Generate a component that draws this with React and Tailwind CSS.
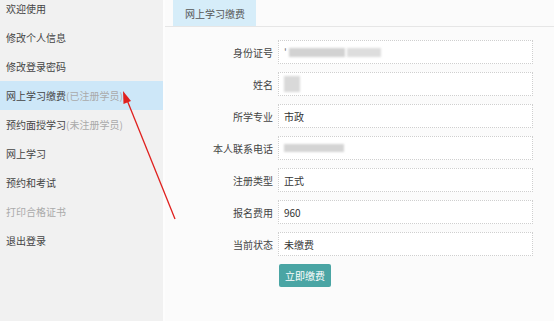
const menu = [
  { label: "欢迎使用" },
  { label: "修改个人信息" },
  { label: "修改登录密码" },
  { label: "网上学习缴费", note: "(已注册学员)", active: true },
  { label: "预约面授学习", note: "(未注册学员)" },
  { label: "网上学习" },
  { label: "预约和考试" },
  { label: "打印合格证书", disabled: true },
  { label: "退出登录" },
];

const fields = [
  { label: "身份证号", blur: "id" },
  { label: "姓名", blur: "name" },
  { label: "所学专业", value: "市政" },
  { label: "本人联系电话", blur: "phone" },
  { label: "注册类型", value: "正式" },
  { label: "报名费用", value: "960" },
  { label: "当前状态", value: "未缴费" },
];

const Blur = ({ kind }) => {
  if (kind === "id") {
    return (
      <div className="flex items-center gap-[2px]">
        <span className="text-[10px] leading-none text-[#777]">'</span>
        <div className="h-[9px] w-[56px] bg-[#d2d2d2] blur-[1px]" />
        <div className="h-[9px] w-[34px] bg-[#dddddd] blur-[1px]" />
      </div>
    );
  }
  if (kind === "name") {
    return <div className="h-[16px] w-[16px] bg-[#d9d9d9] blur-[1px]" />;
  }
  return <div className="h-[8px] w-[60px] bg-[#d4d4d4] blur-[1px]" />;
};

export default function App() {
  return (
    <div
      className="relative flex h-[321px] w-[554px] overflow-hidden bg-[#fbfbfb] text-[10px] text-[#444]"
      style={{ fontFamily: '"Noto Sans CJK SC", "Noto Sans", sans-serif' }}
    >
      {/* sidebar */}
      <div className="w-[163px] shrink-0 bg-[#f1f1f1]">
        <div className="-mt-[6px]">
          {menu.map((item) => (
            <div
              key={item.label}
              className={`flex h-[29px] items-center pl-[6px] ${item.active ? "bg-[#cde7f8]" : ""} ${item.disabled ? "text-[#aaa]" : "text-[#444]"}`}
            >
              <span>{item.label}</span>
              {item.note && <span className="text-[#aaa]">{item.note}</span>}
            </div>
          ))}
        </div>
      </div>
      <div className="w-[2px] shrink-0 bg-[#fdfdfd]" />

      {/* main */}
      <div className="flex-1">
        <div className="border-b border-[#e6e6e6] pl-[8px]">
          <div className="flex h-[26px] w-[83px] items-center bg-[#d6edf9] pl-[12px] text-[#555]">网上学习缴费</div>
        </div>

        <div className="mt-[13px] flex flex-col gap-[8px]">
          {fields.map((f) => (
            <div key={f.label} className="flex items-center">
              <div className="w-[108px] text-right text-[#444]">{f.label}</div>
              <div className="ml-[5px] flex h-[24px] w-[255px] items-center border border-dotted border-[#cfcfcf] bg-white pl-[5px] text-[#333]">
                {f.blur ? <Blur kind={f.blur} /> : f.value}
              </div>
            </div>
          ))}
        </div>

        <div className="mt-[8px] pl-[114px]">
          <button className="h-[23px] w-[52px] rounded-[2px] bg-[#4aa5a4] text-[10px] text-white">立即缴费</button>
        </div>
      </div>

      {/* annotation arrow */}
      <svg className="pointer-events-none absolute left-0 top-0" width="554" height="321">
        <line x1="175" y1="219" x2="127" y2="100" stroke="#e0201e" strokeWidth="1.3" />
        <polygon points="123,91 123.5,104 131,101" fill="#e0201e" />
      </svg>
    </div>
  );
}
